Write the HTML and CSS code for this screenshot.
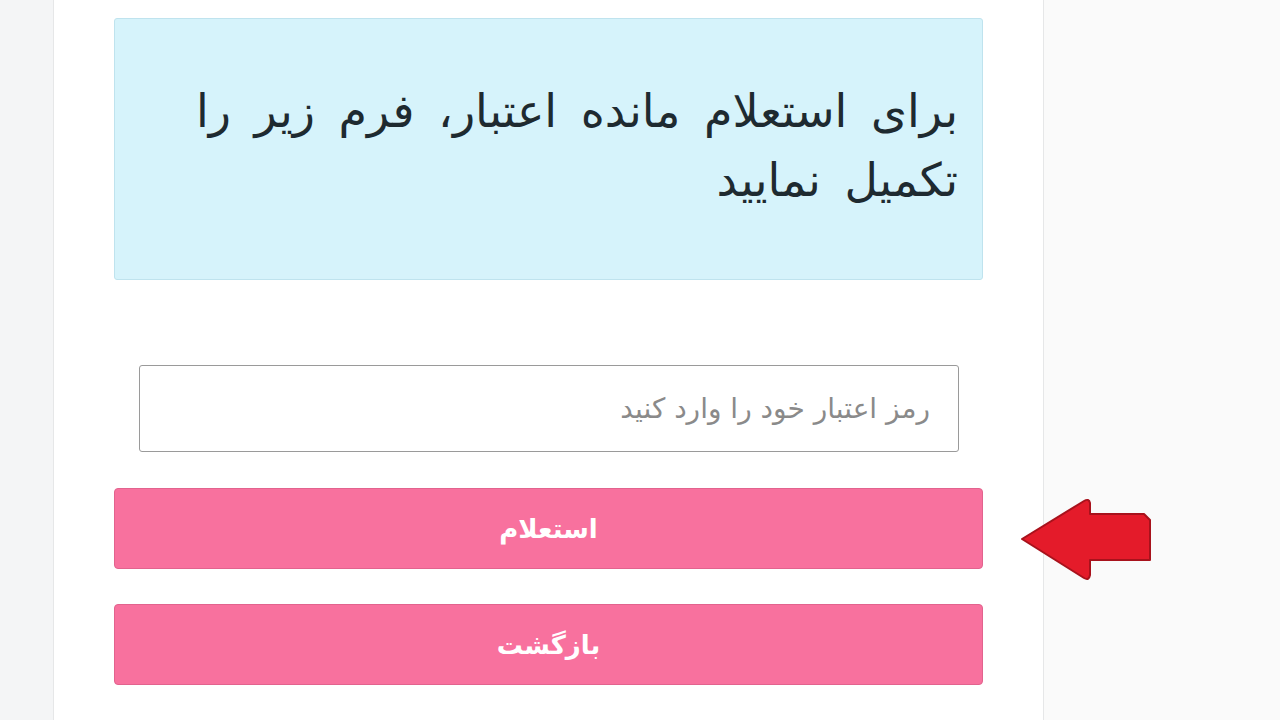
FILE: index.html
```html
<!DOCTYPE html>
<html lang="fa" dir="rtl">
<head>
<meta charset="utf-8">
<title>استعلام مانده اعتبار</title>
<link rel="stylesheet" href="styles.css">
</head>
<body>
<div class="page">
  <div class="gutter-right">
    <svg class="arrow" width="136" height="86" viewBox="0 0 136 86" aria-hidden="true">
      <path d="M2 42 L64 4 Q69 1 70 6 L70 17 L124 17 L130 23 L130 63 L70 63 L70 78 Q69 84 64 81 Z" fill="#e41b2a" stroke="#a8121c" stroke-width="2" stroke-linejoin="round"/>
    </svg>
  </div>
  <main class="panel">
    <div class="notice">برای استعلام مانده اعتبار، فرم زیر را تکمیل نمایید</div>
    <form class="form">
      <input class="field" type="text" placeholder="رمز اعتبار خود را وارد کنید">
      <button class="btn" type="button">استعلام</button>
      <button class="btn" type="button">بازگشت</button>
    </form>
  </main>
  <div class="gutter-left"></div>
</div>
</body>
</html>
```
FILE: styles.css
```css
* { box-sizing: border-box; }
html, body { margin: 0; height: 100%; }
body {
  background: #f5f6f7;
  font-family: "DejaVu Sans", "Noto Sans", sans-serif;
  overflow: hidden;
}
.page {
  display: flex;
  height: 720px;
}
.gutter-left {
  width: 53px;
  background: #f4f5f6;
}
.gutter-right {
  flex: 1;
  background: #fafafa;
  position: relative;
}
.arrow {
  position: absolute;
  right: 124px;
  top: 497px;
}
.panel {
  width: 991px;
  background: #ffffff;
  border-left: 1px solid #e6e7e8;
  border-right: 1px solid #e6e7e8;
  padding: 18px 60px 0 60px;
}
.notice {
  height: 262px;
  background: #d6f3fb;
  border: 1px solid #bfe3ee;
  border-radius: 3px;
  color: #1e2a30;
  font-size: 46px;
  word-spacing: 9px;
  line-height: 69px;
  padding: 58px 24px 0 24px;
  text-align: right;
}
.form {
  display: flex;
  flex-direction: column;
  margin-top: 85px;
}
.field {
  height: 87px;
  margin: 0 24px 0 25px;
  border: 1px solid #9a9a9a;
  border-radius: 3px;
  background: #fff;
  font-family: inherit;
  font-size: 28px;
  padding: 0 28px;
  color: #333;
  direction: rtl;
}
.field::placeholder { color: #8a8a8a; }
.btn {
  height: 81px;
  margin-top: 36px;
  border: 1px solid #e2638e;
  border-radius: 4px;
  background: #f8719e;
  color: #ffffff;
  font-family: inherit;
  font-weight: bold;
  font-size: 26px;
}
.btn + .btn { margin-top: 35px; }
```
